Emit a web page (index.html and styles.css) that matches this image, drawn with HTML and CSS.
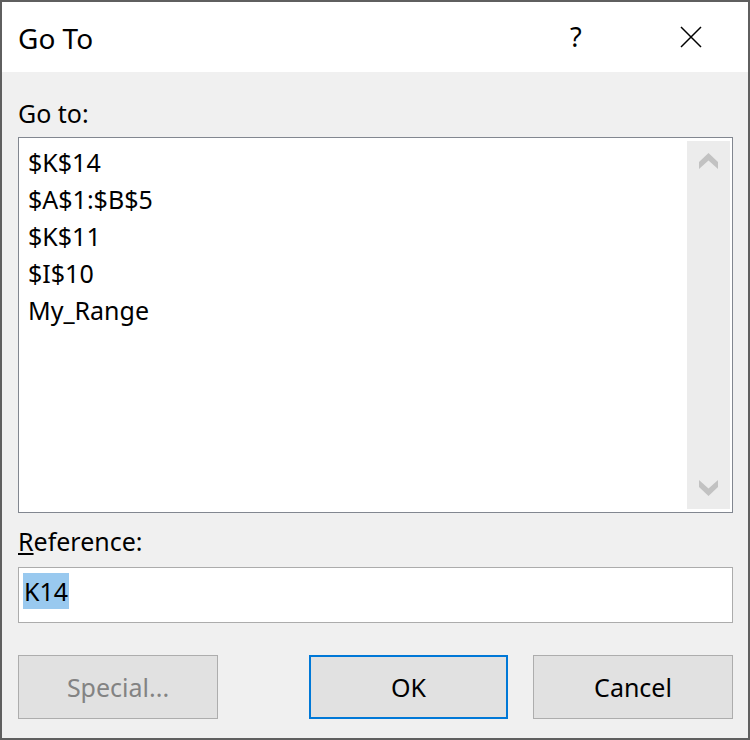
FILE: index.html
```html
<!DOCTYPE html>
<html>
<head>
<meta charset="utf-8">
<link rel="stylesheet" href="styles.css">
</head>
<body>
<div class="window">
  <div class="titlebar">
    <div class="title">Go To</div>
    <div class="help">?</div>
    <div class="close">
      <svg width="22" height="22" viewBox="0 0 22 22"><path d="M1 1 L21 21 M21 1 L1 21" stroke="#000" stroke-width="1.5" fill="none"/></svg>
    </div>
  </div>
  <div class="content">
    <div class="label label-goto">Go to:</div>
    <div class="listbox">
      <div class="items">
        <div class="item">$K$14</div>
        <div class="item">$A$1:$B$5</div>
        <div class="item">$K$11</div>
        <div class="item">$I$10</div>
        <div class="item">My_Range</div>
      </div>
      <div class="scrollbar">
        <svg class="chev" width="19" height="17" viewBox="0 0 19 17"><polygon points="9.5,0 19,9 19,16 9.5,7.5 0,16 0,9" fill="#c2c2c2"/></svg>
        <svg class="chev" width="19" height="17" viewBox="0 0 19 17"><polygon points="9.5,17 19,8 19,1 9.5,9.5 0,1 0,8" fill="#c2c2c2"/></svg>
      </div>
    </div>
    <div class="label label-ref"><u>R</u>eference:</div>
    <div class="textbox"><span class="sel">K14</span></div>
    <div class="buttons">
      <div class="btn btn-special">Special...</div>
      <div class="btn btn-ok">OK</div>
      <div class="btn btn-cancel">Cancel</div>
    </div>
  </div>
</div>
</body>
</html>
```

FILE: styles.css
```css
html, body {
  margin: 0;
  padding: 0;
}
body {
  font-family: "Noto Sans", "Open Sans", sans-serif;
  font-size: 25px;
  color: #000;
  background: #f0f0f0;
}
.window {
  box-sizing: border-box;
  width: 750px;
  height: 740px;
  border: 2px solid #5f5f5f;
  background: #f0f0f0;
  display: flex;
  flex-direction: column;
}
.titlebar {
  height: 70px;
  background: #fff;
  display: flex;
  align-items: center;
  padding-left: 16px;
}
.title {
  flex: 1;
  font-size: 28px;
  line-height: 36px;
  padding-top: 2px;
}
.help {
  width: 22px;
  margin-right: 88px;
  font-size: 27px;
  line-height: 34px;
}
.close {
  width: 22px;
  height: 22px;
  margin-right: 46px;
  display: flex;
}
.content {
  flex: 1;
  padding: 25px 15px 0 16px;
  display: flex;
  flex-direction: column;
}
.label {
  line-height: 32px;
}
.listbox {
  margin-top: 8px;
  height: 376px;
  box-sizing: border-box;
  border: 1px solid #828790;
  background: #fff;
  display: flex;
  padding: 3px 2px 3px 0;
}
.items {
  flex: 1;
  padding: 3px 0 0 9px;
}
.item {
  line-height: 37px;
}
.scrollbar {
  width: 43px;
  background: #ececec;
  display: flex;
  flex-direction: column;
  justify-content: space-between;
  align-items: center;
  padding: 12px 0 13px;
}
.label-ref {
  margin-top: 12px;
}
.textbox {
  margin-top: 10px;
  height: 56px;
  box-sizing: border-box;
  border: 1px solid #acacac;
  background: #fff;
  padding: 5px 0 0 4px;
}
.sel {
  display: inline-block;
  height: 36px;
  line-height: 36px;
  background: #99c9ef;
  padding: 0 1px;
}
.buttons {
  margin-top: 32px;
  display: flex;
  gap: 25px;
}
.btn {
  box-sizing: border-box;
  width: 200px;
  height: 64px;
  background: #e1e1e1;
  border: 1px solid #adadad;
  display: flex;
  align-items: center;
  justify-content: center;
}
.btn-special {
  color: #838383;
  margin-right: auto;
}
.btn-ok {
  width: 199px;
  border: 2px solid #0078d7;
}
```
